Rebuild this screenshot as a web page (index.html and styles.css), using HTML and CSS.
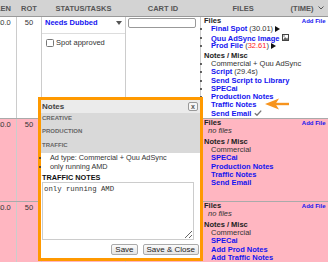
FILE: index.html
```html
<!DOCTYPE html>
<html>
<head>
  <title>Spot Orders</title>
  <link rel="stylesheet" href="styles.css">
</head>
<body>
  <div class="sheet">
    <table class="orders">
      <colgroup>
        <col class="c-len">
        <col class="c-rot">
        <col class="c-status">
        <col class="c-cart">
        <col class="c-files">
      </colgroup>
      <thead>
        <tr>
          <th>LEN</th>
          <th>ROT</th>
          <th>STATUS/TASKS</th>
          <th>CART ID</th>
          <th>
            <div class="files-head">
              <span>FILES</span>
              <span class="time-sort">(TIME)
                <svg class="chev" width="6" height="4" viewBox="0 0 6 4"><polyline points="0.5,0.5 3,3 5.5,0.5" fill="none" stroke="#555" stroke-width="1"/></svg>
              </span>
            </div>
          </th>
        </tr>
      </thead>
      <tbody>
        <tr class="spot first">
          <td class="num">30.0</td>
          <td class="num">50</td>
          <td class="status">
            <div class="status-select">
              <span>Needs Dubbed</span>
              <svg width="6" height="4" viewBox="0 0 6 4"><polygon points="0,0 6,0 3,4" fill="#555"/></svg>
            </div>
            <label class="approve"><input type="checkbox"> Spot approved</label>
          </td>
          <td class="cart"><input type="text" class="cart-input"></td>
          <td class="files">
            <div class="files-title"><b>Files</b><a class="add-file">Add File</a></div>
            <ul>
              <li><a>Final Spot</a> (30.01) <svg class="play" width="5" height="6" viewBox="0 0 5 6"><polygon points="0,0 5,3 0,6" fill="#111"/></svg></li>
              <li><a>Quu AdSync Image</a> <svg class="pic" width="7" height="7" viewBox="0 0 7 7"><rect x="0.5" y="0.5" width="6" height="6" fill="#fff" stroke="#444"/><polygon points="1,6 3,3 4.5,4.5 5.5,3.5 6,6" fill="#666"/><circle cx="2" cy="2" r="0.8" fill="#666"/></svg></li>
              <li><a>Prod File</a> (<span class="late">32.61</span>) <svg class="play" width="5" height="6" viewBox="0 0 5 6"><polygon points="0,0 5,3 0,6" fill="#111"/></svg></li>
            </ul>
            <div class="files-title notes-head"><b>Notes / Misc</b></div>
            <ul>
              <li>Commercial + Quu AdSync</li>
              <li><a>Script</a> (29.4s)</li>
              <li><a>Send Script to Library</a></li>
              <li><a>SPECai</a></li>
              <li><a>Production Notes</a></li>
              <li><a>Traffic Notes</a></li>
              <li><a>Send Email</a> <svg class="tick" width="8" height="6" viewBox="0 0 8 6"><polyline points="0.8,3.2 3,5.2 7.2,0.6" fill="none" stroke="#777" stroke-width="1.4"/></svg></li>
            </ul>
          </td>
        </tr>
        <tr class="spot pink second">
          <td class="num">30.0</td>
          <td class="num">50</td>
          <td class="status">
            <div class="status-select"><span>Needs Dubbed</span></div>
          </td>
          <td class="cart"></td>
          <td class="files">
            <div class="files-title"><b>Files</b><a class="add-file">Add File</a></div>
            <p class="empty">no files</p>
            <div class="files-title notes-head"><b>Notes / Misc</b></div>
            <ul>
              <li>Commercial</li>
              <li><a>SPECai</a></li>
              <li><a>Production Notes</a></li>
              <li><a>Traffic Notes</a></li>
              <li><a>Send Email</a></li>
            </ul>
          </td>
        </tr>
        <tr class="spot pink">
          <td class="num">30.0</td>
          <td class="num">50</td>
          <td class="status">
            <div class="status-select"><span>Needs Dubbed</span></div>
          </td>
          <td class="cart"></td>
          <td class="files">
            <div class="files-title"><b>Files</b><a class="add-file">Add File</a></div>
            <p class="empty">no files</p>
            <div class="files-title notes-head"><b>Notes / Misc</b></div>
            <ul>
              <li>Commercial</li>
              <li><a>SPECai</a></li>
              <li><a>Add Prod Notes</a></li>
              <li><a>Add Traffic Notes</a></li>
              <li>voice parts</li>
            </ul>
          </td>
        </tr>
      </tbody>
    </table>

    <svg class="pointer" width="28" height="16" viewBox="0 0 28 16">
      <line x1="10" y1="8" x2="25" y2="8" stroke="#f7941d" stroke-width="2.4"/>
      <polygon points="1,8 15,2.5 11.5,8 15,13.5" fill="#f7941d"/>
    </svg>

    <div class="notes-modal">
      <div class="notes-title">
        <span>Notes</span>
        <button class="notes-close">x</button>
      </div>
      <div class="notes-tab">CREATIVE</div>
      <div class="notes-tab">PRODUCTION</div>
      <div class="notes-tab">TRAFFIC</div>
      <div class="notes-body">
        <ul>
          <li>Ad type: Commercial + Quu AdSync</li>
          <li>only running AMD</li>
        </ul>
        <div class="notes-label">TRAFFIC NOTES</div>
        <textarea class="notes-text">only running AMD</textarea>
        <div class="notes-actions">
          <button>Save</button>
          <button>Save &amp; Close</button>
        </div>
      </div>
    </div>
  </div>
</body>
</html>
```

FILE: styles.css
```css
body {
  margin: 0;
  font-family: "Liberation Sans", Arial, sans-serif;
  font-size: 7.5px;
  color: #333;
  background: #fff;
}
.sheet {
  position: relative;
  height: 262px;
  overflow: hidden;
}
.orders {
  margin-left: -10px;
  border-collapse: collapse;
  table-layout: fixed;
  width: 337px;
}
.c-len { width: 26px; }
.c-rot { width: 25px; }
.c-status { width: 84px; }
.c-cart { width: 75px; }
.c-files { width: 127px; }
th {
  height: 16px;
  padding: 0;
  background: #d3d3d3;
  border-bottom: 1px solid #999;
  color: #555;
  font-weight: bold;
  text-align: center;
}
.files-head {
  display: flex;
  justify-content: space-between;
  align-items: center;
  padding: 0 4px 0 32px;
}
.time-sort {
  display: flex;
  align-items: center;
  gap: 4px;
}
td {
  padding: 0;
  vertical-align: top;
  border-left: 1px solid #ccc;
  border-bottom: 1px solid #aaa;
}
.first td { height: 99px; }
.second td { height: 80px; }
.pink td { background: #ffb6c1; }
.num {
  text-align: center;
  padding-top: 2px;
  line-height: 8px;
}
.status-select {
  height: 14px;
  display: flex;
  justify-content: space-between;
  align-items: flex-start;
  padding: 2px 3px 0;
  border-bottom: 1px solid #ddd;
  line-height: 8px;
  color: #1414f0;
  font-weight: bold;
}
.status-select svg { margin-top: 2px; }
.approve {
  display: flex;
  align-items: center;
  gap: 2px;
  padding: 5px 0 0 4px;
  line-height: 8px;
}
.approve input {
  appearance: none;
  width: 8px;
  height: 8px;
  margin: 0;
  border: 1px solid #777;
  border-radius: 1.5px;
  background: #fff;
}
.cart { padding: 1px 4px 0 2px; }
.cart-input {
  display: block;
  box-sizing: border-box;
  width: 68px;
  height: 10px;
  margin: 0;
  padding: 0;
  border: 1px solid #999;
  border-radius: 2px;
}
.files {
  padding: 0 2px 0 3px;
  line-height: 8.3px;
}
.files-title {
  display: flex;
  justify-content: space-between;
  align-items: baseline;
  color: #222;
}
.notes-head { margin-top: 1px; }
.add-file {
  font-size: 6px;
  font-weight: bold;
  color: #1414f0;
}
.files ul {
  margin: 0;
  padding-left: 7px;
}
.files a {
  color: #1414f0;
  font-weight: bold;
}
.late { color: #f22; }
.empty {
  margin: 0 0 2px 4px;
  font-style: italic;
}
.play, .pic, .tick { vertical-align: -0.5px; }
.pointer {
  position: absolute;
  left: 264px;
  top: 96px;
}
.notes-modal {
  position: absolute;
  left: 38px;
  top: 97px;
  width: 165px;
  height: 164px;
  box-sizing: border-box;
  border: 3px solid #f90;
  background: #fff;
  display: flex;
  flex-direction: column;
}
.notes-title {
  height: 13px;
  flex-shrink: 0;
  display: flex;
  justify-content: space-between;
  align-items: center;
  padding: 0 2px 0 1px;
  background: #ebebeb;
  color: #444;
  font-size: 8px;
  font-weight: bold;
}
.notes-close {
  width: 10px;
  height: 9px;
  padding: 0;
  border: 1px solid #999;
  border-radius: 2px;
  background: #f6f6f6;
  color: #555;
  font-family: "Liberation Sans", Arial, sans-serif;
  font-size: 7px;
  font-weight: bold;
  line-height: 6px;
}
.notes-tab {
  height: 13.4px;
  flex-shrink: 0;
  line-height: 11px;
  padding-left: 1px;
  background: #d9d9d9;
  color: #666;
  font-size: 6px;
  font-weight: bold;
}
.notes-body {
  padding: 0 1px;
  line-height: 9px;
  font-size: 7.3px;
}
.notes-body ul {
  margin: 0;
  padding-left: 8px;
}
.notes-label {
  margin-top: 2px;
  color: #111;
  font-weight: bold;
}
.notes-text {
  display: block;
  box-sizing: border-box;
  width: 152px;
  height: 58px;
  margin: 0;
  padding: 2px 1px;
  border: 1px solid #ccc;
  font-family: "Liberation Mono", monospace;
  font-size: 7.3px;
  line-height: 8px;
  color: #333;
}
.notes-actions {
  display: flex;
  justify-content: flex-end;
  gap: 5px;
  margin-top: 4px;
}
.notes-actions button {
  height: 11px;
  padding: 0 3px;
  border: 1px solid #aaa;
  border-radius: 2px;
  background: linear-gradient(#fbfbfb, #e4e4e4);
  color: #222;
  font-family: "Liberation Sans", Arial, sans-serif;
  font-size: 8px;
  line-height: 9px;
}
```
